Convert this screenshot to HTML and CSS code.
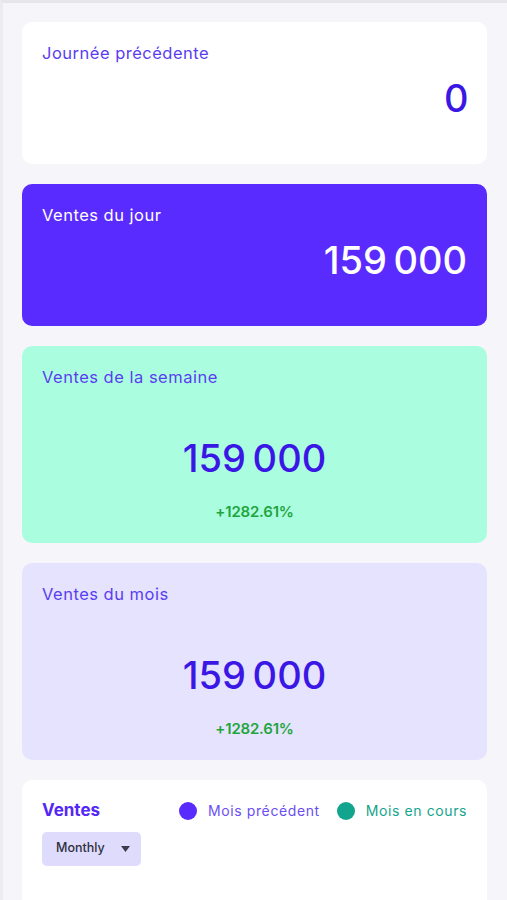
FILE: index.html
```html
<!DOCTYPE html>
<html>
<head>
    <meta charset="utf-8">
    <title>Tableau de bord - Ventes</title>
    <link rel="stylesheet" href="styles.css">
</head>
<body>

    <div id="page">

        <div class="card card-white">
            <div class="card-title">Journée précédente</div>
            <div class="card-value right">0</div>
        </div>

        <div class="card card-violet">
            <div class="card-title">Ventes du jour</div>
            <div class="card-value right">159&#8239;000</div>
        </div>

        <div class="card card-mint tall">
            <div class="card-title">Ventes de la semaine</div>
            <div class="card-value center">159&#8239;000</div>
            <div class="card-diff">+1282.61%</div>
        </div>

        <div class="card card-lilac tall">
            <div class="card-title">Ventes du mois</div>
            <div class="card-value center">159&#8239;000</div>
            <div class="card-diff">+1282.61%</div>
        </div>

        <div class="card card-white chart">
            <div class="chart-head">
                <div class="chart-title">Ventes</div>
                <div class="legend">
                    <span class="legend-item prev"><i class="dot"></i>Mois précédent</span>
                    <span class="legend-item cur"><i class="dot"></i>Mois en cours</span>
                </div>
            </div>
            <div class="select">
                Monthly
                <svg width="9" height="6" viewBox="0 0 9 6"><path d="M0 0 L9 0 L4.5 6 Z" fill="#3b3b4a"/></svg>
            </div>
        </div>

    </div>

</body>
</html>
```

FILE: styles.css
```css
    HTML, BODY {
        margin: 0;
        padding: 0;
    }
    BODY
    {
        background: #f6f6fa;
        font: normal 16.5px/1.5 "Inter", "Noto Sans", sans-serif;
        color: #5a3df0;
    }
    #page
    {
        border-top: solid 3px #e6e6ea;
        border-left: solid 3px #ececf0;
        padding: 19px 20px 0 19px;
        height: 900px;
        box-sizing: border-box;
        display: flex;
        flex-direction: column;
        gap: 20px;
    }

    /* stat cards */
    .card
    {
        border-radius: 10px;
        height: 142px;
        box-sizing: border-box;
        padding: 19px 20px 0 20px;
        display: flex;
        flex-direction: column;
        flex-shrink: 0;
    }
    .card.tall {
        height: 197px;
    }
    .card-white { background: #fff; }
    .card-violet { background: #5a2bfe; color: #fff; }
    .card-mint { background: #abfde0; }
    .card-lilac { background: #e5e3fd; }

    .card-title {
        line-height: 24px;
        letter-spacing: 0.5px;
    }
    .card-value
    {
        font-size: 38px;
        font-weight: 500;
        line-height: 44px;
        color: #3b17e6;
        letter-spacing: -1.5px;
        margin-top: 11px;
    }
    .card-violet .card-value {
        color: #fff;
    }
    .card-value.right {
        text-align: right;
    }
    .card-value.center {
        text-align: center;
        margin-top: 47px;
    }
    .card-diff
    {
        text-align: center;
        color: #1fa53e;
        font-size: 15px;
        font-weight: 600;
        letter-spacing: -0.2px;
        line-height: 20px;
        margin-top: 22px;
    }

    /* chart card */
    .card.chart {
        height: auto;
        flex-grow: 1;
        border-radius: 10px 10px 0 0;
        padding-top: 18px;
    }
    .chart-head
    {
        display: flex;
        justify-content: space-between;
        align-items: center;
    }
    .chart-title {
        font-size: 17px;
        font-weight: 700;
        letter-spacing: 0;
        color: #5427f5;
    }
    .legend {
        display: flex;
        gap: 17px;
        font-size: 14px;
        letter-spacing: 0.6px;
    }
    .legend-item {
        display: flex;
        align-items: center;
        gap: 11px;
    }
    .legend-item .dot {
        width: 18px;
        height: 18px;
        border-radius: 50%;
    }
    .prev { color: #6b4ef2; }
    .prev .dot { background: #5a2bfe; }
    .cur { color: #14a58c; }
    .cur .dot { background: #11a58e; }

    .select
    {
        margin-top: 8px;
        width: 99px;
        height: 34px;
        box-sizing: border-box;
        padding: 0 11px 0 14px;
        border-radius: 5px;
        background: #dedbfc;
        color: #2f2f3c;
        font-size: 12.5px;
        font-weight: 500;
        display: flex;
        align-items: center;
        justify-content: space-between;
    }
```
